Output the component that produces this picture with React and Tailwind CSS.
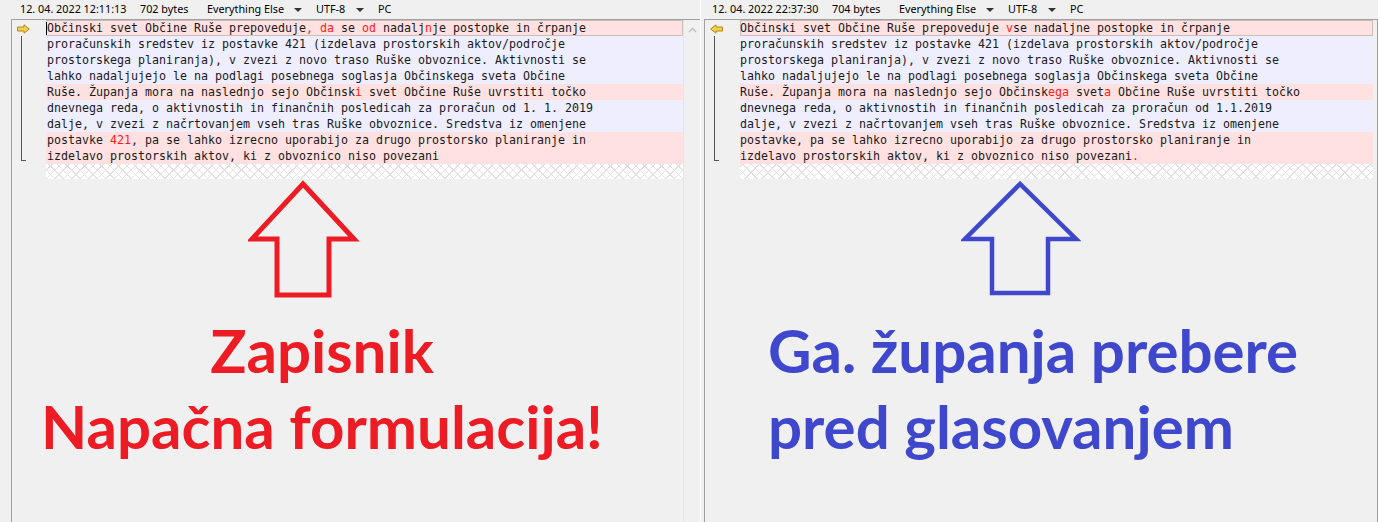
import React from 'react';

const pink = 'bg-[#ffe1e1]';
const lav = 'bg-[#eeeeff]';

// each line: [bgClass, segments]; segment strings starting with '!' are diffs
const leftLines = [
  [pink, ['Občinski svet Občine Ruše prepoveduje', '!, da', ' se ', '!od', ' nadalj', '!n', 'je postopke in črpanje']],
  [lav, ['proračunskih sredstev iz postavke 421 (izdelava prostorskih aktov/področje']],
  [lav, ['prostorskega planiranja), v zvezi z novo traso Ruške obvoznice. Aktivnosti se']],
  [lav, ['lahko nadaljujejo le na podlagi posebnega soglasja Občinskega sveta Občine']],
  [pink, ['Ruše. Županja mora na naslednjo sejo Občinsk', '!i', ' svet Občine Ruše uvrstiti točko']],
  [lav, ['dnevnega reda, o aktivnostih in finančnih posledicah za proračun od 1. 1. 2019']],
  [lav, ['dalje, v zvezi z načrtovanjem vseh tras Ruške obvoznice. Sredstva iz omenjene']],
  [pink, ['postavke ', '!421', ', pa se lahko izrecno uporabijo za drugo prostorsko planiranje in']],
  [pink, ['izdelavo prostorskih aktov, ki z obvoznico niso povezani']],
];

const rightLines = [
  [pink, ['Občinski svet Občine Ruše prepoveduje ', '!v', 'se nadaljne postopke in črpanje']],
  [lav, ['proračunskih sredstev iz postavke 421 (izdelava prostorskih aktov/področje']],
  [lav, ['prostorskega planiranja), v zvezi z novo traso Ruške obvoznice. Aktivnosti se']],
  [lav, ['lahko nadaljujejo le na podlagi posebnega soglasja Občinskega sveta Občine']],
  [pink, ['Ruše. Županja mora na naslednjo sejo Občinsk', '!ega', ' svet', '!a', ' Občine Ruše uvrstiti točko']],
  [lav, ['dnevnega reda, o aktivnostih in finančnih posledicah za proračun od 1.1.2019']],
  [lav, ['dalje, v zvezi z načrtovanjem vseh tras Ruške obvoznice. Sredstva iz omenjene']],
  [pink, ['postavke, pa se lahko izrecno uporabijo za drugo prostorsko planiranje in']],
  [pink, ['izdelavo prostorskih aktov, ki z obvoznico niso povezani', '!.']],
];

function Caret() {
  return (
    <svg width="8" height="4" viewBox="0 0 8 4" className="ml-[10px] mr-[14px] shrink-0">
      <path d="M0 0h8L4 4z" fill="#333" />
    </svg>
  );
}

function Header({ date, bytes, pad }) {
  return (
    <div className={`flex h-[19px] items-center whitespace-nowrap text-[10.8px] text-black ${pad}`} style={{ fontFamily: '"Noto Sans", "Open Sans", sans-serif' }}>
      <span className="w-[103px] shrink-0">{date}</span>
      <span className="ml-[17px] w-[50px] shrink-0">{bytes}</span>
      <span className="ml-[17px] w-[77px] shrink-0">Everything Else</span>
      <Caret />
      <span className="w-[30px] shrink-0">UTF-8</span>
      <Caret />
      <span className="shrink-0">PC</span>
    </div>
  );
}

function DiffArrow({ dir }) {
  return (
    <svg width="13" height="10" viewBox="0 0 13 10" className="absolute top-[4px] left-[5px]">
      {dir === 'right' ? (
        <path d="M0.5 3h6.5V0.8L12.3 5 7 9.2V7H0.5z" fill="#f6d04d" stroke="#b08a1c" strokeWidth="1" />
      ) : (
        <path d="M12.5 3H6V0.8L0.7 5 6 9.2V7h6.5z" fill="#f6d04d" stroke="#b08a1c" strokeWidth="1" />
      )}
    </svg>
  );
}

function Rows({ lines, caret }) {
  return (
    <div className="relative text-[11.63px] leading-4 text-[#1a1a1a]" style={{ fontFamily: '"DejaVu Sans Mono", monospace' }}>
      {lines.map(([bg, segs], i) => (
        <div
          key={i}
          className={`h-4 whitespace-pre ${caret ? 'pl-px' : ''} ${bg} ${i === 0 ? 'shadow-[inset_0_0_0_1px_#cdbcbc]' : ''}`}
        >
          {segs.map((s, j) =>
            s.startsWith('!') ? (
              <span key={j} className="text-[#ff1a1a]">{s.slice(1)}</span>
            ) : (
              <span key={j}>{s}</span>
            )
          )}
        </div>
      ))}
      {caret ? <div className="absolute left-0 top-[2px] h-[13px] w-px bg-black" /> : null}
      <div className="h-[15px] bg-white bg-[repeating-linear-gradient(45deg,#e2e2e2_0_1px,transparent_1px_6px),repeating-linear-gradient(-45deg,#e2e2e2_0_1px,transparent_1px_6px)]" />
    </div>
  );
}

function Gutter({ dir, width }) {
  return (
    <div className={`relative shrink-0 ${width}`}>
      <DiffArrow dir={dir} />
      <div className="absolute left-[9px] top-[16px] h-[125px] w-[5px] border-b border-l border-[#555]" />
    </div>
  );
}

function UpArrow({ color, w, h, pts, left, top, stroke }) {
  return (
    <svg width={w} height={h} className="absolute" style={{ left, top }}>
      <polygon points={pts} fill="none" stroke={color} strokeWidth={stroke} strokeLinejoin="miter" />
    </svg>
  );
}

export default function App() {
  return (
    <div className="relative flex h-[522px] w-[1378px] overflow-hidden bg-[#f0f0f0]">
      {/* left pane */}
      <div className="flex w-[700px] shrink-0 flex-col">
        <Header date="12. 04. 2022 12:11:13" bytes="702 bytes" pad="pl-[20px]" />
        <div className="ml-[11px] flex flex-1 border-l border-t border-[#a0a0a0]">
          <Gutter dir="right" width="w-[34px]" />
          <div className="w-[637px] shrink-0">
            <Rows lines={leftLines} caret />
          </div>
          <div className="flex w-[17px] shrink-0 justify-center border-l border-[#e6e6e6] pt-[7px]">
            <svg width="9" height="6" viewBox="0 0 9 6">
              <path d="M1 5l3.5-3.5L8 5" fill="none" stroke="#c4c4c4" strokeWidth="1.6" />
            </svg>
          </div>
        </div>
      </div>

      {/* right pane */}
      <div className="flex w-[678px] shrink-0 flex-col border-l border-white">
        <Header date="12. 04. 2022 22:37:30" bytes="704 bytes" pad="pl-[11px]" />
        <div className="ml-[3px] flex flex-1 border-l border-t border-[#a0a0a0]">
          <Gutter dir="left" width="w-[35px]" />
          <div className="w-[633px] shrink-0">
            <Rows lines={rightLines} />
          </div>
          <div className="w-[5px] shrink-0 border-r border-[#a0a0a0]" />
        </div>
      </div>

      {/* annotations drawn over the panes */}
      <UpArrow
        color="#ed1c24"
        w={112}
        h={120}
        left={248}
        top={180}
        stroke={5}
        pts="55,4 4,59 29,59 29,115 81,115 81,59 106,59"
      />
      <UpArrow
        color="#3f48cc"
        w={120}
        h={120}
        left={961}
        top={180}
        stroke={4.5}
        pts="59,4 4,59 31,59 31,113 87,113 87,59 115,59"
      />

      <div
        className="absolute left-[22px] top-[312px] w-[600px] text-center text-[60px] font-bold leading-[76px] text-[#ed1c24]"
        style={{ fontFamily: 'Lato, "Open Sans", sans-serif' }}
      >
        <div>Zapisnik</div>
        <div>Napačna formulacija!</div>
      </div>
      <div
        className="absolute left-[768px] top-[312px] text-[60px] font-bold leading-[76px] text-[#3f48cc]"
        style={{ fontFamily: 'Lato, "Open Sans", sans-serif' }}
      >
        <div>Ga. županja prebere</div>
        <div>pred glasovanjem</div>
      </div>
    </div>
  );
}
